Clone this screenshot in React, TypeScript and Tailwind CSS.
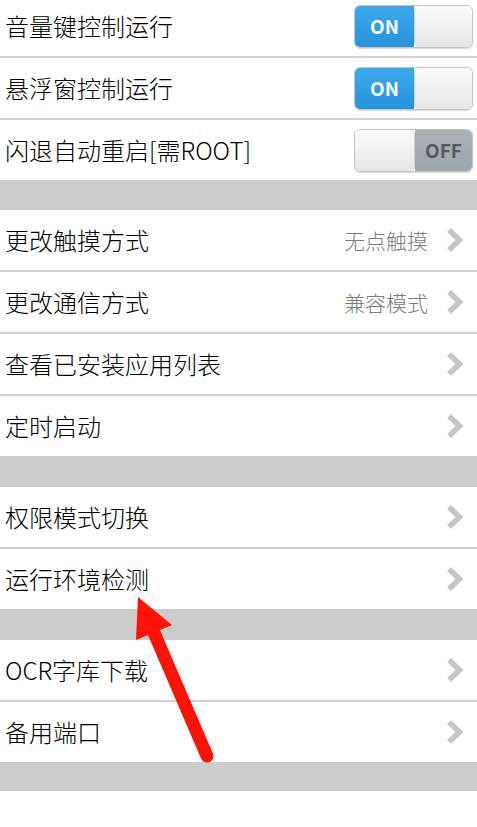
import type { ReactNode } from 'react';

const font = { fontFamily: '"Noto Sans CJK SC", "Noto Sans", sans-serif' };

function Toggle({ on }: { on: boolean }) {
  return (
    <div className="flex h-[43px] w-[119px] overflow-hidden rounded-[6px] border border-[#c4c4c4] shadow-[0_1px_1px_rgba(0,0,0,0.15)]">
      {on ? (
        <>
          <div className="flex w-[59px] items-center justify-center bg-gradient-to-b from-[#3aa9ee] to-[#2593dc] text-[19px] font-bold text-white">
            ON
          </div>
          <div className="flex-1 rounded-[5px] border-l border-[#cfcfcf] bg-gradient-to-b from-[#fbfbfb] to-[#e6e6e6]" />
        </>
      ) : (
        <>
          <div className="w-[60px] rounded-[5px] border-r border-[#cfcfcf] bg-gradient-to-b from-[#fbfbfb] to-[#e6e6e6]" />
          <div className="flex flex-1 items-center justify-center bg-gradient-to-b from-[#abb1b7] to-[#9ea5ac] text-[19px] font-bold text-[#555a5e]">
            OFF
          </div>
        </>
      )}
    </div>
  );
}

function Chevron() {
  return (
    <svg width="17" height="24" viewBox="0 0 17 24" className="ml-[18px]">
      <path d="M3 2 L13.5 12 L3 22" fill="none" stroke="#c6c6c6" strokeWidth="5.5" strokeLinejoin="miter" />
    </svg>
  );
}

function Row({ label, right, first }: { label: string; right: ReactNode; first?: boolean }) {
  return (
    <div className={`flex h-[60px] items-center justify-between bg-white pl-[5px] ${first ? '-mt-[4px]' : ''}`}>
      <span className="text-[24px] font-light leading-none text-black">{label}</span>
      {right}
    </div>
  );
}

function ToggleRow({ label, on, first }: { label: string; on: boolean; first?: boolean }) {
  return (
    <Row
      label={label}
      first={first}
      right={
        <div className="pr-[4px]">
          <Toggle on={on} />
        </div>
      }
    />
  );
}

function NavRow({ label, value }: { label: string; value?: string }) {
  return (
    <Row
      label={label}
      right={
        <div className="flex items-center pr-[14px]">
          {value && <span className="text-[21px] font-light leading-none text-[#7a7a7a]">{value}</span>}
          <Chevron />
        </div>
      }
    />
  );
}

const Divider = () => <div className="h-[2px] bg-[#d0d0d0]" />;

export default function App() {
  return (
    <div className="relative h-[827px] w-[477px] overflow-hidden bg-white" style={font}>
      <ToggleRow label="音量键控制运行" on first />
      <Divider />
      <ToggleRow label="悬浮窗控制运行" on />
      <Divider />
      <ToggleRow label="闪退自动重启[需ROOT]" on={false} />

      <div className="h-[30px] bg-[#cccccc]" />

      <NavRow label="更改触摸方式" value="无点触摸" />
      <Divider />
      <NavRow label="更改通信方式" value="兼容模式" />
      <Divider />
      <NavRow label="查看已安装应用列表" />
      <Divider />
      <NavRow label="定时启动" />

      <div className="h-[31px] bg-[#cccccc]" />

      <NavRow label="权限模式切换" />
      <Divider />
      <NavRow label="运行环境检测" />

      <div className="h-[31px] bg-[#cccccc]" />

      <NavRow label="OCR字库下载" />
      <Divider />
      <NavRow label="备用端口" />

      <div className="h-[29px] bg-[#cccccc]" />

      {/* annotation arrow */}
      <svg className="pointer-events-none absolute left-0 top-0" width="477" height="827" viewBox="0 0 477 827">
        <line x1="207" y1="756" x2="152" y2="628" stroke="#ff1208" strokeWidth="13" strokeLinecap="round" />
        <polygon points="138,597 172,625 136,640" fill="#ff1208" />
      </svg>
    </div>
  );
}
